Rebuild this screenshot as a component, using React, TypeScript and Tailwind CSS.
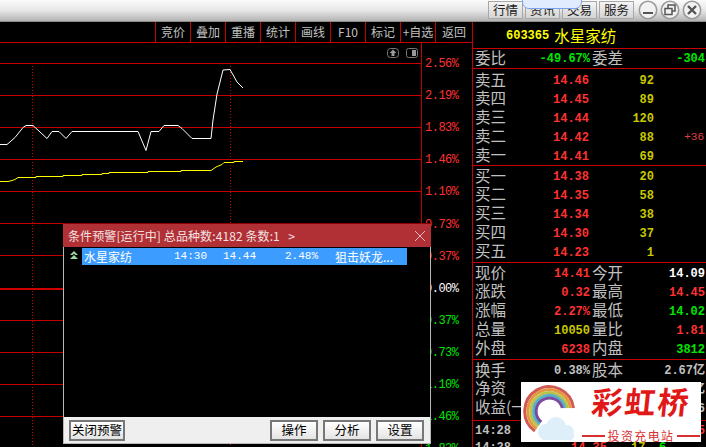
import React from "react";

const CJK = "font-['Noto_Sans_CJK_SC','Liberation_Sans',sans-serif]";
const MONO = "font-['Liberation_Mono','Noto_Sans_CJK_SC',monospace]";
const LINE = "#c40000";

const white: [number, number][] = [[0,144.5],[7,144.5],[15,137.5],[23,127.5],[26,125.5],[33,125.5],[47,138.5],[52,131.5],[59,131.5],[66,138.5],[72,131.5],[138,131.5],[146,150.5],[151,131.5],[159,131.5],[164,125.5],[178,125.5],[182,128.5],[192,138.5],[211,138.5],[213,120],[217,94],[223,70],[230,69.5],[237,82],[240,85],[243,88]];
const yellow: [number, number][] = [[0,181.5],[8,181.5],[12,180.5],[15,179.5],[18,177.5],[36,177.5],[36,176.5],[63,176.5],[63,175.5],[82,175.5],[82,174.5],[102,174.5],[102,173.5],[109,173.5],[109,172.5],[148,172.5],[148,171.5],[181,171.5],[181,170.5],[211,170.5],[216,167],[222,164.5],[224,162.5],[234,162.5],[234,161.5],[243,161.5]];
const gridY = [63, 95, 127, 159, 191, 223, 255, 320, 352, 384, 416];
const pts = (a: [number, number][]) => a.map((p) => p.join(",")).join(" ");

function Tab({ t }: { t: string }) {
  return (
    <div className={`h-[18px] w-[35px] flex items-center justify-center border border-[#a8a8a8] bg-gradient-to-b from-[#f4f4f4] to-[#d4d4d4] text-[12.5px] leading-none text-[#222] ${CJK}`}>
      {t}
    </div>
  );
}

function WinBtn({ kind }: { kind: "min" | "max" | "close" }) {
  return (
    <svg width="20" height="20" viewBox="0 0 20 20" className="shrink-0">
      <circle cx="10" cy="10" r="8.7" fill="#f2f2f2" stroke="#9a9a9a" strokeWidth="1.6" />
      {kind === "min" && <rect x="5" y="12" width="10" height="2" fill="#555" />}
      {kind === "max" && (
        <g fill="none" stroke="#555" strokeWidth="1.5">
          <rect x="8" y="5" width="7" height="6" />
          <rect x="5" y="8.5" width="7" height="6" fill="#f2f2f2" />
        </g>
      )}
      {kind === "close" && <path d="M6 6 L14 14 M14 6 L6 14" stroke="#555" strokeWidth="2.4" />}
    </svg>
  );
}

function TopBar() {
  return (
    <div className="h-[22px] shrink-0 flex items-start pl-[488px] pt-[1px] gap-[2px] bg-gradient-to-b from-[#fbfbfb] via-[#e6e6e6] to-[#b4b4b4] border-b border-[#8c8c8c]">
      <Tab t="行情" />
      <Tab t="资讯" />
      <Tab t="交易" />
      <Tab t="服务" />
      <div className="flex gap-[2px] ml-[2px] -mt-[1px]">
        <WinBtn kind="min" />
        <WinBtn kind="max" />
        <WinBtn kind="close" />
      </div>
    </div>
  );
}

function Toolbar() {
  const items = ["竞价", "叠加", "重播", "统计", "画线", "F10", "标记", "+自选", "返回"];
  return (
    <div className="h-[21px] shrink-0 flex justify-end border-b border-[#c80000]">
      {items.map((t) => (
        <div key={t} className={`w-[35px] last:w-[37px] flex items-center justify-center border-l border-[#c80000] text-[12px] leading-none whitespace-nowrap text-[#c0c0c0] ${CJK}`}>
          {t}
        </div>
      ))}
    </div>
  );
}

function Chart() {
  return (
    <svg width="421" height="404" viewBox="0 43 421 404" className="shrink-0 block">
      <g shapeRendering="crispEdges">
        {gridY.map((y) => (
          <line key={y} x1="0" x2="421" y1={y + 0.5} y2={y + 0.5} stroke={LINE} />
        ))}
        <rect x="0" y="288" width="421" height="2" fill="#d00000" />
        <line x1="32.5" x2="32.5" y1="66" y2="447" stroke="#d00000" strokeDasharray="1 2" />
        <line x1="230.5" x2="230.5" y1="66" y2="447" stroke="#d00000" strokeDasharray="1 2" />
      </g>
      <polyline points={pts(yellow)} fill="none" stroke="#ffff00" strokeWidth="1" />
      <polyline points={pts(white)} fill="none" stroke="#ffffff" strokeWidth="1" />
      <g fill="none" stroke="#777" strokeWidth="1">
        <rect x="387.5" y="48.5" width="11" height="9" rx="3" />
        <rect x="406.5" y="48.5" width="11" height="9" rx="2" />
      </g>
      <path d="M393 49.5 L396.5 53 L394.5 53 L394.5 56 L391.5 56 L391.5 53 L389.5 53 Z" fill="#999" />
      <rect x="412" y="50" width="4" height="6" fill="#999" />
    </svg>
  );
}

function Axis() {
  const rows = [
    ["2.56%", "text-[#ff3232]"],
    ["2.19%", "text-[#ff3232]"],
    ["1.83%", "text-[#ff3232]"],
    ["1.46%", "text-[#ff3232]"],
    ["1.10%", "text-[#ff3232]"],
    ["0.73%", "text-[#ff3232]"],
    ["0.37%", "text-[#ff3232]"],
    ["0.00%", "text-white"],
    ["0.37%", "text-[#00e600]"],
    ["0.73%", "text-[#00e600]"],
    ["1.10%", "text-[#00e600]"],
    ["1.46%", "text-[#00e600]"],
    ["1.83%", "text-[#00e600]"],
  ];
  return (
    <div className={`flex-1 border-l border-[#c80000] pl-[3px] pt-[5px] flex flex-col text-[12px] tracking-[-0.5px] leading-none ${MONO}`}>
      {rows.map(([t, c], i) => (
        <div key={i} className={`h-[32.1px] shrink-0 flex items-center ${c}`}>{t}</div>
      ))}
    </div>
  );
}

function Book({ l, p, q, x }: { l: string; p: string; q: string; x?: string }) {
  return (
    <div className="h-[18.8px] flex items-center">
      <div className="w-[116px] flex justify-between items-center pl-[2px]">
        <span className={`pb-[2px] text-[15.5px] leading-none text-[#c0c0c0] ${CJK}`}>{l}</span>
        <span className={`pt-[2px] text-[12px] leading-none font-bold text-[#ff3232] ${MONO}`}>{p}</span>
      </div>
      <div className={`w-[65px] pt-[2px] text-right text-[12px] leading-none font-bold text-[#c8c800] ${MONO}`}>{q}</div>
      {x && <div className={`flex-1 pt-[2px] text-right pr-[2px] text-[11px] leading-none text-[#e04040] ${MONO}`}>{x}</div>}
    </div>
  );
}

function Stat({ a, av, ac, b, bv, bc }: { a: string; av: string; ac: string; b: string; bv: string; bc: string }) {
  return (
    <div className="h-[18.8px] flex items-center">
      <div className="w-[117px] flex justify-between items-center pl-[2px]">
        <span className={`pb-[2px] text-[15.5px] leading-none text-[#c0c0c0] whitespace-nowrap ${CJK}`}>{a}</span>
        <span className={`pt-[2px] text-[12px] leading-none font-bold whitespace-nowrap ${ac} ${MONO}`}>{av}</span>
      </div>
      <div className="flex-1 flex justify-between items-center pl-[2px] pr-[1px]">
        <span className={`pb-[2px] text-[15.5px] leading-none text-[#c0c0c0] ${CJK}`}>{b}</span>
        <span className={`pt-[2px] text-[12px] leading-none font-bold whitespace-nowrap ${bc} ${MONO}`}>{bv}</span>
      </div>
    </div>
  );
}

const R = "text-[#ff3232]";
const G = "text-[#00e600]";
const Y = "text-[#c8c800]";
const W = "text-white";
const S = "text-[#c0c0c0]";

function RightPanel() {
  return (
    <div className="flex-1 border-l border-[#c80000] flex flex-col overflow-hidden">
      <div className="h-[27px] shrink-0 flex items-center pl-[33px] gap-[5px] pt-[1px] border-b border-[#c80000]">
        <span className={`text-[12px] leading-none font-bold text-[#ffff00] ${MONO}`}>603365</span>
        <span className={`text-[15.5px] leading-none text-[#ffff00] ${CJK}`}>水星家纺</span>
      </div>
      <div className="h-[20px] shrink-0 border-b border-[#c80000] flex flex-col justify-center">
        <Stat a="委比" av="-49.67%" ac={G} b="委差" bv="-304" bc={G} />
      </div>
      <div className="h-[97px] shrink-0 pt-[2px] border-b border-[#c80000]">
        <Book l="卖五" p="14.46" q="92" />
        <Book l="卖四" p="14.45" q="89" />
        <Book l="卖三" p="14.44" q="120" />
        <Book l="卖二" p="14.42" q="88" x="+36" />
        <Book l="卖一" p="14.41" q="69" />
      </div>
      <div className="h-[97px] shrink-0 pt-[1px] border-b border-[#c80000]">
        <Book l="买一" p="14.38" q="20" />
        <Book l="买二" p="14.35" q="58" />
        <Book l="买三" p="14.34" q="38" />
        <Book l="买四" p="14.30" q="37" />
        <Book l="买五" p="14.23" q="1" />
      </div>
      <div className="h-[97px] shrink-0 pt-[1px] border-b border-[#c80000]">
        <Stat a="现价" av="14.41" ac={R} b="今开" bv="14.09" bc={W} />
        <Stat a="涨跌" av="0.32" ac={R} b="最高" bv="14.45" bc={R} />
        <Stat a="涨幅" av="2.27%" ac={R} b="最低" bv="14.02" bc={G} />
        <Stat a="总量" av="10050" ac={Y} b="量比" bv="1.81" bc={R} />
        <Stat a="外盘" av="6238" ac={R} b="内盘" bv="3812" bc={G} />
      </div>
      <div className="h-[61px] shrink-0 pt-[1px] border-b border-[#c80000]">
        <Stat a="换手" av="0.38%" ac={S} b="股本" bv="2.67亿" bc={S} />
        <Stat a="净资" av="" ac={S} b="" bv="亿" bc={S} />
        <Stat a="收益(一)" av="" ac={S} b="" bv="6" bc={S} />
      </div>
      <div className={`pt-[1px] text-[12px] font-bold leading-none ${MONO}`}>
        <div className="h-[17px] flex items-center justify-between pl-[2px] pr-[1px]">
          <span className={S}>14:28</span>
          <span className={R}>5</span>
        </div>
        <div className="h-[17px] flex items-center pl-[2px] pr-[1px]">
          <span className={`w-[96px] ${S}`}>14:28</span>
          <span className={`w-[60px] ${R}`}>14.35</span>
          <span className="w-[28px] text-[#c8c800]">17</span>
          <span className={G}>6</span>
        </div>
      </div>
    </div>
  );
}

function DlgBtn({ t, w = "w-[48px]" }: { t: string; w?: string }) {
  return (
    <div className={`${w} h-[21px] flex items-center justify-center border-2 border-[#777] bg-gradient-to-b from-[#ffffff] to-[#e4e4e4] text-[12.5px] leading-none whitespace-nowrap text-black ${CJK}`}>
      {t}
    </div>
  );
}

function Dialog() {
  return (
    <div className="absolute left-[63px] top-[223px] w-[368px] h-[221px] flex flex-col bg-black border-x border-b border-[#b8b8b8]">
      <div className="-mx-[1px] h-[24px] shrink-0 flex items-center justify-between pl-[5px] pr-[6px] bg-[#b03036] border-t border-[#8a0000]">
        <span className={`text-[12px] leading-none tracking-[0.1px] whitespace-pre text-[#f2e2e2] ${CJK}`}>条件预警[运行中] 总品种数:4182 条数:1   &gt;</span>
        <svg width="10" height="10" viewBox="0 0 10 10">
          <path d="M0 0 L10 10 M10 0 L0 10" stroke="#e8b8b8" strokeWidth="1" />
        </svg>
      </div>
      <div className="flex-1 flex items-start pt-[1px] pl-[5px]">
        <svg width="10" height="10" viewBox="0 0 10 10" className="mt-[3px] mr-[2px] shrink-0">
          <path d="M5 0 L9 4 L6.5 4 L5 2.8 L3.5 4 L1 4 Z M5 4 L9 8 L1 8 Z" fill="#a0d8a0" />
        </svg>
        <div className="w-[325px] ml-[1px] h-[17px] bg-[#3c9cff] flex items-center text-white leading-none pl-[2px]">
          <span className={`w-[90px] text-[12px] ${CJK}`}>水星家纺</span>
          <span className={`w-[49px] text-[11px] ${MONO}`}>14:30</span>
          <span className={`w-[62px] text-[11px] ${MONO}`}>14.44</span>
          <span className={`w-[50px] text-[11px] ${MONO}`}>2.48%</span>
          <span className={`text-[12px] whitespace-nowrap ${CJK}`}>狙击妖龙...</span>
        </div>
      </div>
      <div className="h-[26px] shrink-0 flex items-center justify-between bg-[#efefef] pl-[5px] pr-[6px]">
        <DlgBtn t="关闭预警" w="w-[56px]" />
        <div className="flex gap-[5px]">
          <DlgBtn t="操作" />
          <DlgBtn t="分析" />
          <DlgBtn t="设置" />
        </div>
      </div>
    </div>
  );
}

function arc(r: number) {
  const cx = 28, cy = 29;
  const a = (125 * Math.PI) / 180;
  return `M${cx + r * Math.cos(a)} ${cy + r * Math.sin(a)} A${r} ${r} 0 1 1 ${cx + r} ${cy - 3}`;
}

function Logo() {
  const bands: [number, string][] = [[24.5, "#cf5a55"], [21.5, "#e6963c"], [18.5, "#b9c24a"], [15.8, "#58b0c8"], [13.3, "#7a4c9e"]];
  return (
    <div className="absolute left-[521px] top-[382px] w-[180px] h-[60px] bg-white flex">
      <svg width="60" height="60" viewBox="0 0 60 60" className="shrink-0">
        {bands.map(([r, c]) => (
          <path key={r} d={arc(r)} fill="none" stroke={c} strokeWidth="3" />
        ))}
        <g fill="#deeff9">
          <circle cx="35" cy="45" r="10" />
          <circle cx="25" cy="50" r="8" />
          <circle cx="46" cy="50" r="7" />
          <rect x="20" y="50" width="33" height="8" rx="4" />
        </g>
      </svg>
      <div className="flex-1 flex flex-col items-center">
        <div className={`h-[37px] flex items-center text-[31px] leading-none font-bold tracking-[2px] whitespace-nowrap text-[#e01818] -skew-x-6 ${CJK}`}>
          彩虹桥
        </div>
        <div className="flex items-center gap-[2px] mt-[11px]">
          <div className="w-[23px] h-[2px] bg-[#d83030]" />
          <span className={`text-[12px] leading-none tracking-[1.4px] whitespace-nowrap text-[#d83030] ${CJK}`}>投资充电站</span>
          <div className="w-[23px] h-[2px] bg-[#d83030]" />
        </div>
      </div>
    </div>
  );
}

export default function App() {
  return (
    <div className="relative w-[706px] h-[447px] overflow-hidden bg-black flex flex-col">
      <TopBar />
      <div className="flex-1 flex min-h-0">
        <div className="w-[472px] shrink-0 flex flex-col">
          <Toolbar />
          <div className="flex-1 flex min-h-0 overflow-hidden">
            <Chart />
            <Axis />
          </div>
        </div>
        <RightPanel />
      </div>
      <Dialog />
      <Logo />
      <div className="absolute left-[522px] top-[-4px] w-[60px] h-[13px] rounded-b-[7px] bg-[#e2ecff] border border-[#7aa2ea]" />
    </div>
  );
}
